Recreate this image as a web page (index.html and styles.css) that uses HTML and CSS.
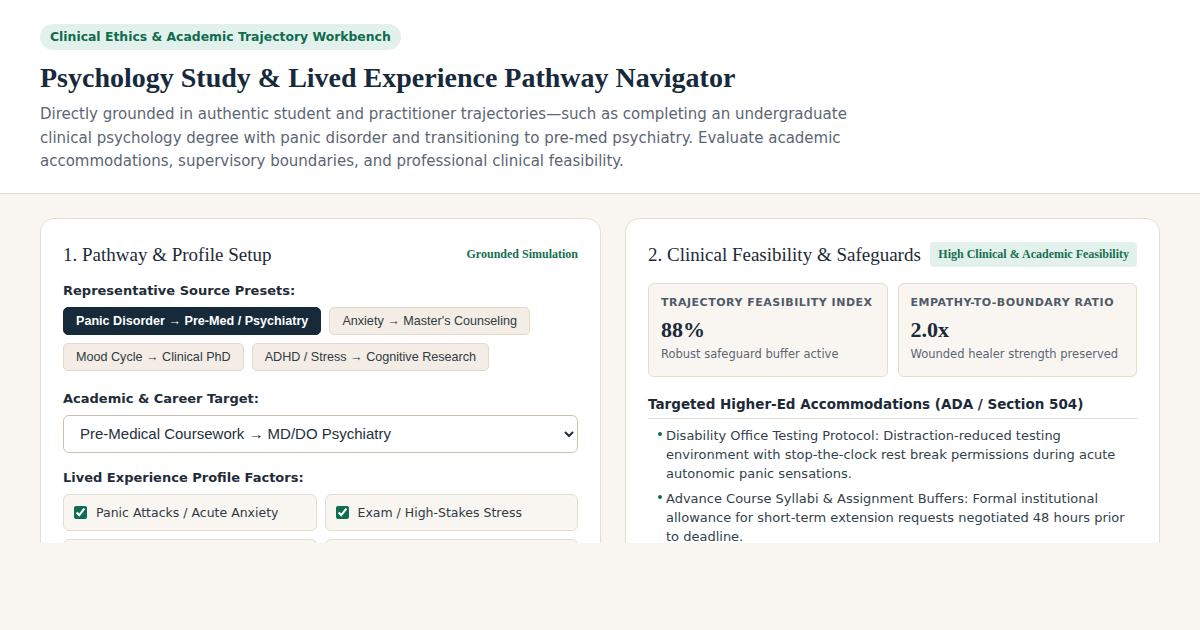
FILE: index.html
```html
<!DOCTYPE html>
<html lang="en">
<head>
<meta charset="utf-8">
<title>Pathway Navigator</title>
<link rel="stylesheet" href="styles.css">
</head>
<body>
<header class="top">
  <span class="eyebrow">Clinical Ethics &amp; Academic Trajectory Workbench</span>
  <h1 class="title">Psychology Study &amp; Lived Experience Pathway Navigator</h1>
  <p class="lead">Directly grounded in authentic student and practitioner trajectories—such as completing an undergraduate clinical psychology degree with panic disorder and transitioning to pre-med psychiatry. Evaluate academic accommodations, supervisory boundaries, and professional clinical feasibility.</p>
</header>
<main class="workspace">
  <div class="grid">
    <section class="card">
      <div class="card-head">
        <h2 class="card-title">1. Pathway &amp; Profile Setup</h2>
        <span class="tag-plain">Grounded Simulation</span>
      </div>
      <div class="field field-presets">
        <div class="label">Representative Source Presets:</div>
        <div class="presets">
          <button class="preset active">Panic Disorder → Pre-Med / Psychiatry</button>
          <button class="preset">Anxiety → Master's Counseling</button>
          <button class="preset">Mood Cycle → Clinical PhD</button>
          <button class="preset">ADHD / Stress → Cognitive Research</button>
        </div>
      </div>
      <div class="field">
        <div class="label">Academic &amp; Career Target:</div>
        <select class="select">
          <option>Pre-Medical Coursework → MD/DO Psychiatry</option>
          <option>Master's Counseling</option>
        </select>
      </div>
      <div class="field">
        <div class="label">Lived Experience Profile Factors:</div>
        <div class="checks">
          <label class="check"><input type="checkbox" checked> Panic Attacks / Acute Anxiety</label>
          <label class="check"><input type="checkbox" checked> Exam / High-Stakes Stress</label>
          <label class="check"><input type="checkbox"> Depressive Episodes</label>
          <label class="check"><input type="checkbox"> Sleep Disruption</label>
        </div>
      </div>
    </section>
    <section class="card">
      <div class="card-head">
        <h2 class="card-title">2. Clinical Feasibility &amp; Safeguards</h2>
        <span class="tag">High Clinical &amp; Academic Feasibility</span>
      </div>
      <div class="metrics">
        <div class="metric">
          <div class="metric-label">Trajectory Feasibility Index</div>
          <div class="metric-value">88%</div>
          <div class="metric-sub">Robust safeguard buffer active</div>
        </div>
        <div class="metric">
          <div class="metric-label">Empathy-to-Boundary Ratio</div>
          <div class="metric-value">2.0x</div>
          <div class="metric-sub">Wounded healer strength preserved</div>
        </div>
      </div>
      <h3 class="section-title">Targeted Higher-Ed Accommodations (ADA / Section 504)</h3>
      <ul class="list">
        <li>Disability Office Testing Protocol: Distraction-reduced testing environment with stop-the-clock rest break permissions during acute autonomic panic sensations.</li>
        <li>Advance Course Syllabi &amp; Assignment Buffers: Formal institutional allowance for short-term extension requests negotiated 48 hours prior to deadline.</li>
        <li>Clinical Placement Scheduling: Predictable rotation hours with supervisor check-ins.</li>
      </ul>
    </section>
  </div>
</main>
</body>
</html>
```
FILE: styles.css
```css
* { box-sizing: border-box; }
html, body { margin: 0; padding: 0; }
body {
  background: #f9f6f1;
  font-family: "DejaVu Sans", sans-serif;
  color: #1f2d3a;
}
.top {
  background: #ffffff;
  border-bottom: 1px solid #e2dcd2;
  padding: 24px 40px 19px;
}
.eyebrow {
  display: inline-block;
  background: #e3f1ec;
  color: #0f6b4c;
  font-weight: bold;
  font-size: 12.4px;
  padding: 6px 10px;
  border-radius: 14px;
  line-height: 14px;
}
.title {
  font-family: "Liberation Serif", serif;
  font-weight: bold;
  font-size: 28px;
  line-height: 36px;
  color: #172a3b;
  margin: 10px 0 7px;
}
.lead {
  margin: 0;
  max-width: 850px;
  font-size: 15px;
  line-height: 23.5px;
  color: #5b6673;
}
.workspace {
  height: 349px;
  overflow: hidden;
  padding: 24px 40px 0;
}
.grid {
  display: grid;
  grid-template-columns: 561px 1fr;
  gap: 24px;
}
.card {
  background: #ffffff;
  border: 1px solid #e6ded3;
  border-radius: 14px;
  padding: 22px 22px 24px;
}
.card-head {
  display: flex;
  justify-content: space-between;
  align-items: center;
  margin-bottom: 14px;
}
.card-title {
  font-family: "Liberation Serif", serif;
  font-weight: normal;
  font-size: 19px;
  color: #1c2a37;
  margin: 0;
  line-height: 28px;
  white-space: nowrap;
}
.tag-plain {
  font-family: "Liberation Serif", serif;
  font-weight: bold;
  font-size: 12px;
  color: #17704f;
}
.tag {
  font-family: "Liberation Serif", serif;
  font-weight: bold;
  font-size: 12px;
  color: #17704f;
  background: #e3f1ec;
  padding: 5px 8px;
  border-radius: 4px;
  white-space: nowrap;
}
.field { margin-bottom: 17px; }
.field-presets { margin-bottom: 20px; }
.label {
  font-weight: bold;
  font-size: 13px;
  color: #1f2d3a;
  margin-bottom: 8px;
  line-height: 16px;
}
.presets {
  display: flex;
  flex-wrap: wrap;
  gap: 8px;
}
.preset {
  font-family: "Liberation Sans", Arial, sans-serif;
  font-size: 12.6px;
  height: 28px;
  padding: 0 12px;
  border: 1px solid #e6d8ca;
  background: #f4ede5;
  color: #2f3a44;
  border-radius: 5px;
}
.preset.active {
  background: #172a3a;
  border-color: #172a3a;
  color: #ffffff;
  font-weight: bold;
}
.select {
  width: 100%;
  height: 38px;
  font-family: "Liberation Sans", Arial, sans-serif;
  font-size: 15px;
  color: #23303c;
  background: #ffffff;
  border: 1px solid #cdbfae;
  border-radius: 6px;
  padding: 0 10px 0 12px;
}
.checks {
  display: grid;
  grid-template-columns: 1fr 1fr;
  gap: 8px;
}
.check {
  display: flex;
  align-items: center;
  gap: 6px;
  height: 37px;
  padding: 0 10px;
  background: #f9f6f1;
  border: 1px solid #e6ded3;
  border-radius: 6px;
  font-size: 12.5px;
  color: #2f3a46;
}
.check input {
  accent-color: #0f6e4f;
  width: 13px;
  height: 13px;
  margin: 0 3px 0 0;
}
.metrics {
  display: grid;
  grid-template-columns: 1fr 1fr;
  gap: 10px;
  margin-bottom: 19px;
}
.metric {
  background: #f9f6f1;
  border: 1px solid #e6dccb;
  border-radius: 6px;
  padding: 12px 12px 14px;
}
.metric-label {
  font-size: 11px;
  font-weight: bold;
  letter-spacing: 0.5px;
  text-transform: uppercase;
  color: #4f5b68;
  line-height: 14px;
  white-space: nowrap;
}
.metric-value {
  font-family: "Liberation Serif", serif;
  font-weight: bold;
  font-size: 22px;
  color: #1c2a37;
  margin: 7px 0 3px;
  line-height: 26px;
}
.metric-sub {
  font-size: 11.5px;
  color: #5b6673;
  line-height: 16px;
  white-space: nowrap;
}
.section-title {
  font-size: 13.5px;
  font-weight: bold;
  color: #1c2a37;
  margin: 0;
  padding-bottom: 6px;
  border-bottom: 1px solid #e3ddd3;
  line-height: 16px;
}
.list {
  list-style: none;
  margin: 7px 0 0;
  padding: 0 0 0 18px;
}
.list li {
  position: relative;
  font-size: 13px;
  line-height: 19px;
  color: #333f4b;
  margin-bottom: 6px;
}
.list li::before {
  content: "";
  position: absolute;
  left: -8px;
  top: 6px;
  width: 4px;
  height: 4px;
  border-radius: 50%;
  background: #0f6e4f;
}
```
